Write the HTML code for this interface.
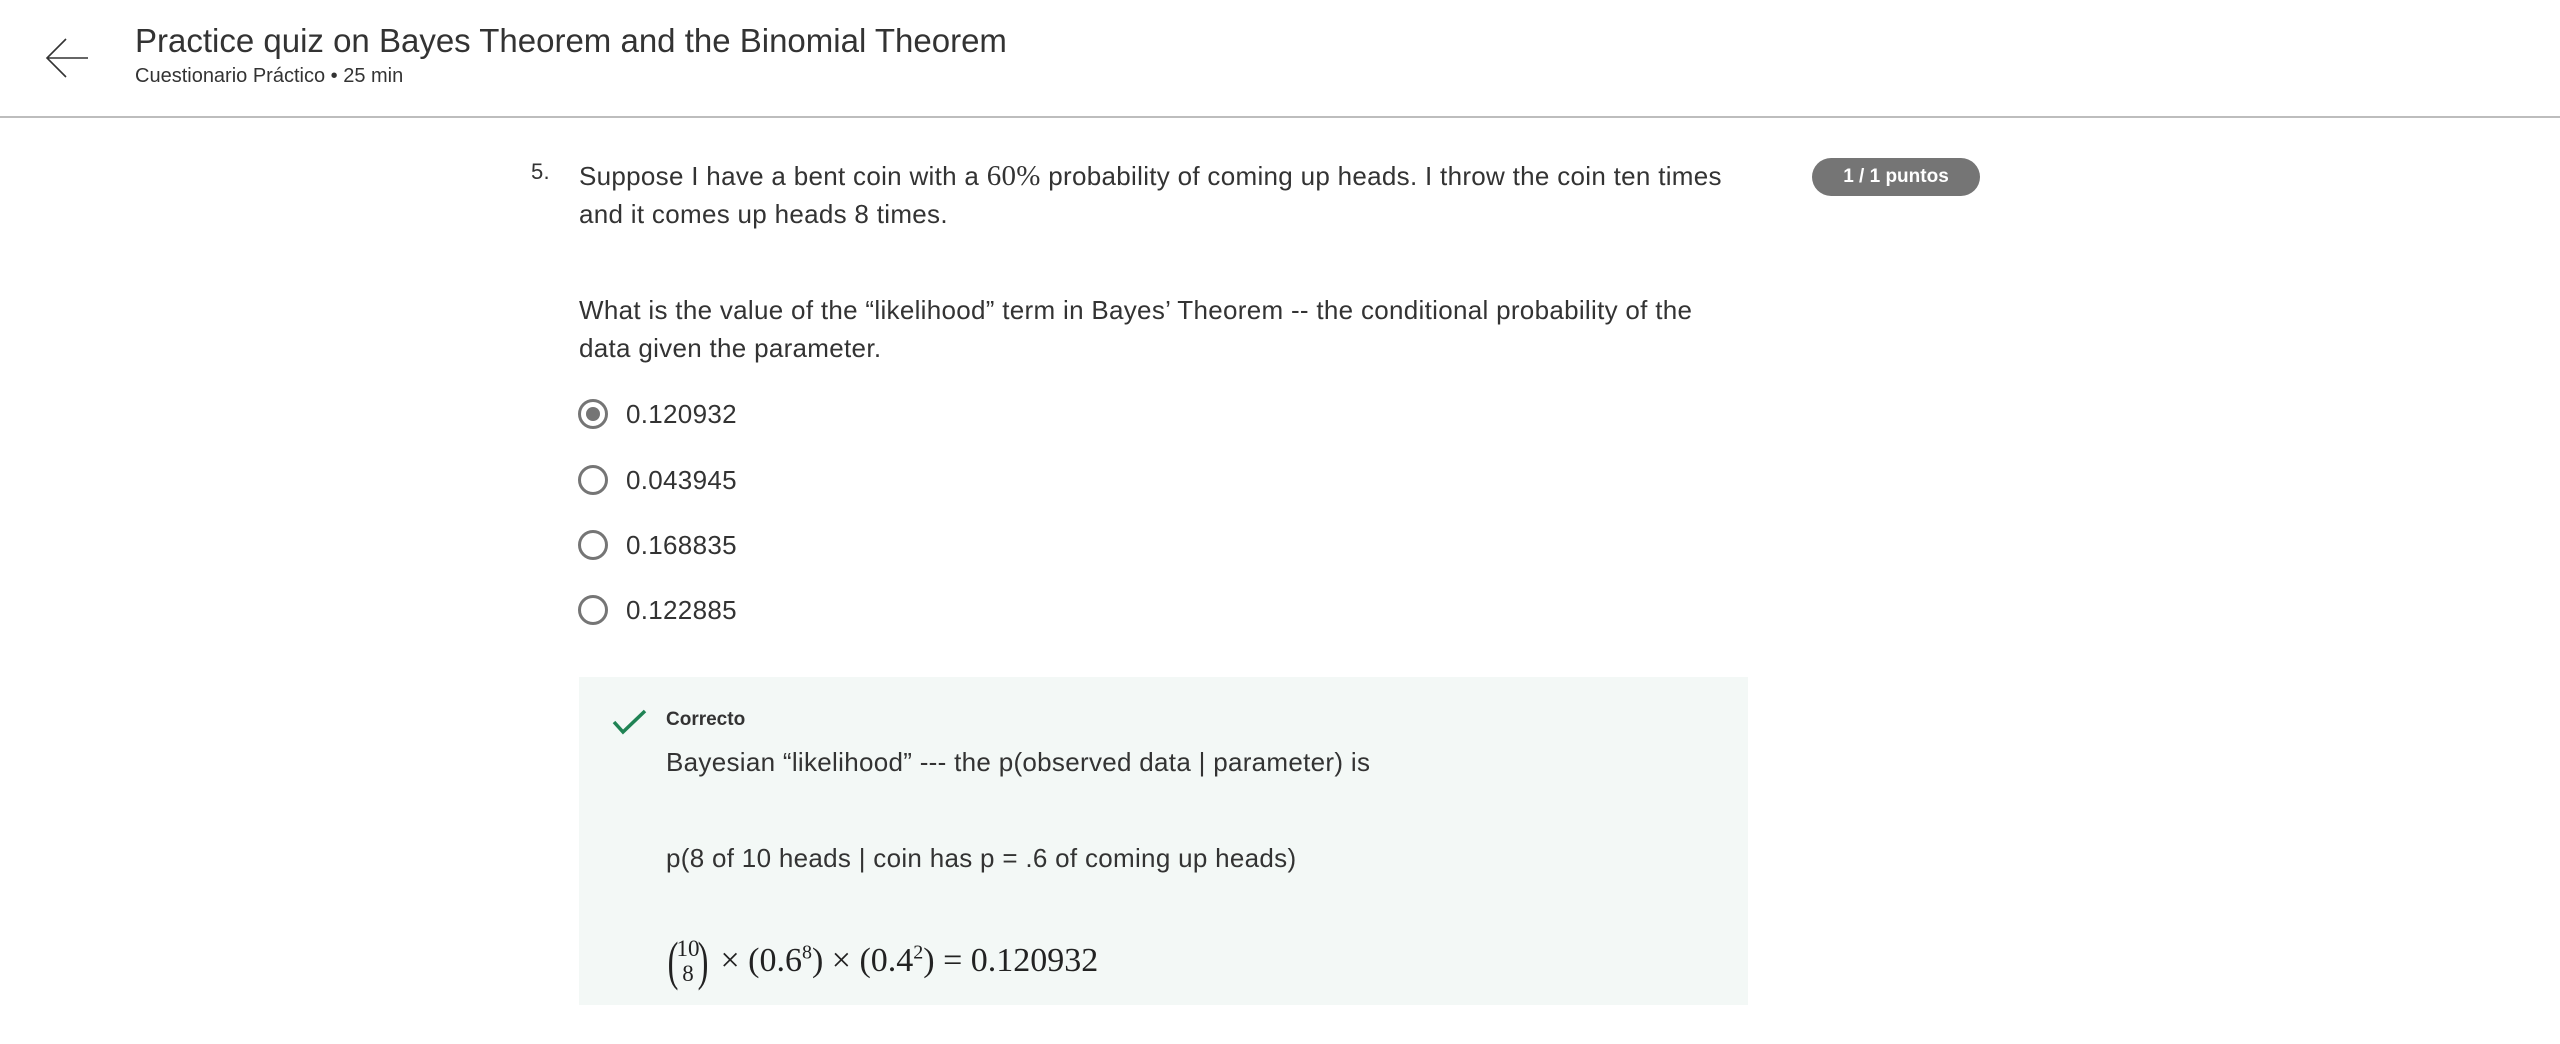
<!DOCTYPE html>
<html><head><meta charset="utf-8">
<style>
*{margin:0;padding:0;box-sizing:border-box}
html,body{width:2560px;height:1044px;background:#fff;overflow:hidden;font-family:"Liberation Sans",sans-serif;color:#333}
.abs{position:absolute;white-space:nowrap}
.hdr{position:absolute;left:0;top:0;width:2560px;height:118px;border-bottom:2px solid #bdbdbd}
.q{font-size:26px;color:#333;letter-spacing:0.3px}
.radio{position:absolute;width:30px;height:30px;border:3px solid #757575;border-radius:50%}
.radio.sel::after{content:"";position:absolute;left:5px;top:5px;width:14px;height:14px;border-radius:50%;background:#757575}
.badge{position:absolute;left:1812px;top:158px;width:168px;height:38px;border-radius:19px;background:#757575;color:#fff;font-weight:bold;font-size:19px;text-align:center;line-height:38px}
.fb{position:absolute;left:579px;top:677px;width:1169px;height:328px;background:#f3f8f6}
.m{font-family:"Liberation Serif","DejaVu Serif",serif;font-size:34px;color:#222}
</style></head><body>
<div class="hdr"></div>
<svg class="abs" style="left:44px;top:36px" width="46" height="44" viewBox="0 0 46 44"><path d="M44 22H4M22 3L3 22L22 41" fill="none" stroke="#333" stroke-width="1.6"/></svg>
<div class="abs" style="left:135px;top:22px;font-size:33px;color:#333">Practice quiz on Bayes Theorem and the Binomial Theorem</div>
<div class="abs" style="left:135px;top:65px;font-size:20px;color:#333">Cuestionario Práctico • 25 min</div>

<div class="abs q" style="left:531px;top:159px;font-size:22px">5.</div>
<div class="abs q" style="left:579px;top:160px">Suppose I have a bent coin with a <span style="font-family:'Liberation Serif',serif;font-size:29px">60%</span> probability of coming up heads. I throw the coin ten times</div>
<div class="abs q" style="left:579px;top:199px">and it comes up heads 8 times.</div>
<div class="badge">1 / 1 puntos</div>
<div class="abs q" style="left:579px;top:295px">What is the value of the “likelihood” term in Bayes’ Theorem -- the conditional probability of the</div>
<div class="abs q" style="left:579px;top:333px">data given the parameter.</div>

<div class="radio sel" style="left:578px;top:399px"></div>
<div class="abs q" style="left:626px;top:399px">0.120932</div>
<div class="radio" style="left:578px;top:465px"></div>
<div class="abs q" style="left:626px;top:465px">0.043945</div>
<div class="radio" style="left:578px;top:530px"></div>
<div class="abs q" style="left:626px;top:530px">0.168835</div>
<div class="radio" style="left:578px;top:595px"></div>
<div class="abs q" style="left:626px;top:595px">0.122885</div>

<div class="fb"></div>
<svg class="abs" style="left:610px;top:706px" width="40" height="32" viewBox="0 0 40 32"><path d="M4 16L13 26L35 5" fill="none" stroke="#1f8354" stroke-width="3.5"/></svg>
<div class="abs" style="left:666px;top:709px;font-size:19px;font-weight:bold;color:#333">Correcto</div>
<div class="abs q" style="left:666px;top:747px">Bayesian “likelihood” --- the p(observed data | parameter) is</div>
<div class="abs q" style="left:666px;top:843px">p(8 of 10 heads | coin has p = .6 of coming up heads)</div>
<div class="abs m" style="left:664px;top:930px;height:56px">
  <span style="display:inline-block;vertical-align:middle;font-size:54px;transform:scaleX(.6);margin-right:-8px">(</span><span style="display:inline-block;vertical-align:middle;text-align:center;font-size:23px;line-height:25px;width:28px">10<br>8</span><span style="display:inline-block;vertical-align:middle;font-size:54px;transform:scaleX(.6);margin-left:-8px">)</span>
  <span style="vertical-align:middle"> × (0.6<sup style="font-size:20px">8</sup>) × (0.4<sup style="font-size:20px">2</sup>) = 0.120932</span>
</div>
</body></html>
